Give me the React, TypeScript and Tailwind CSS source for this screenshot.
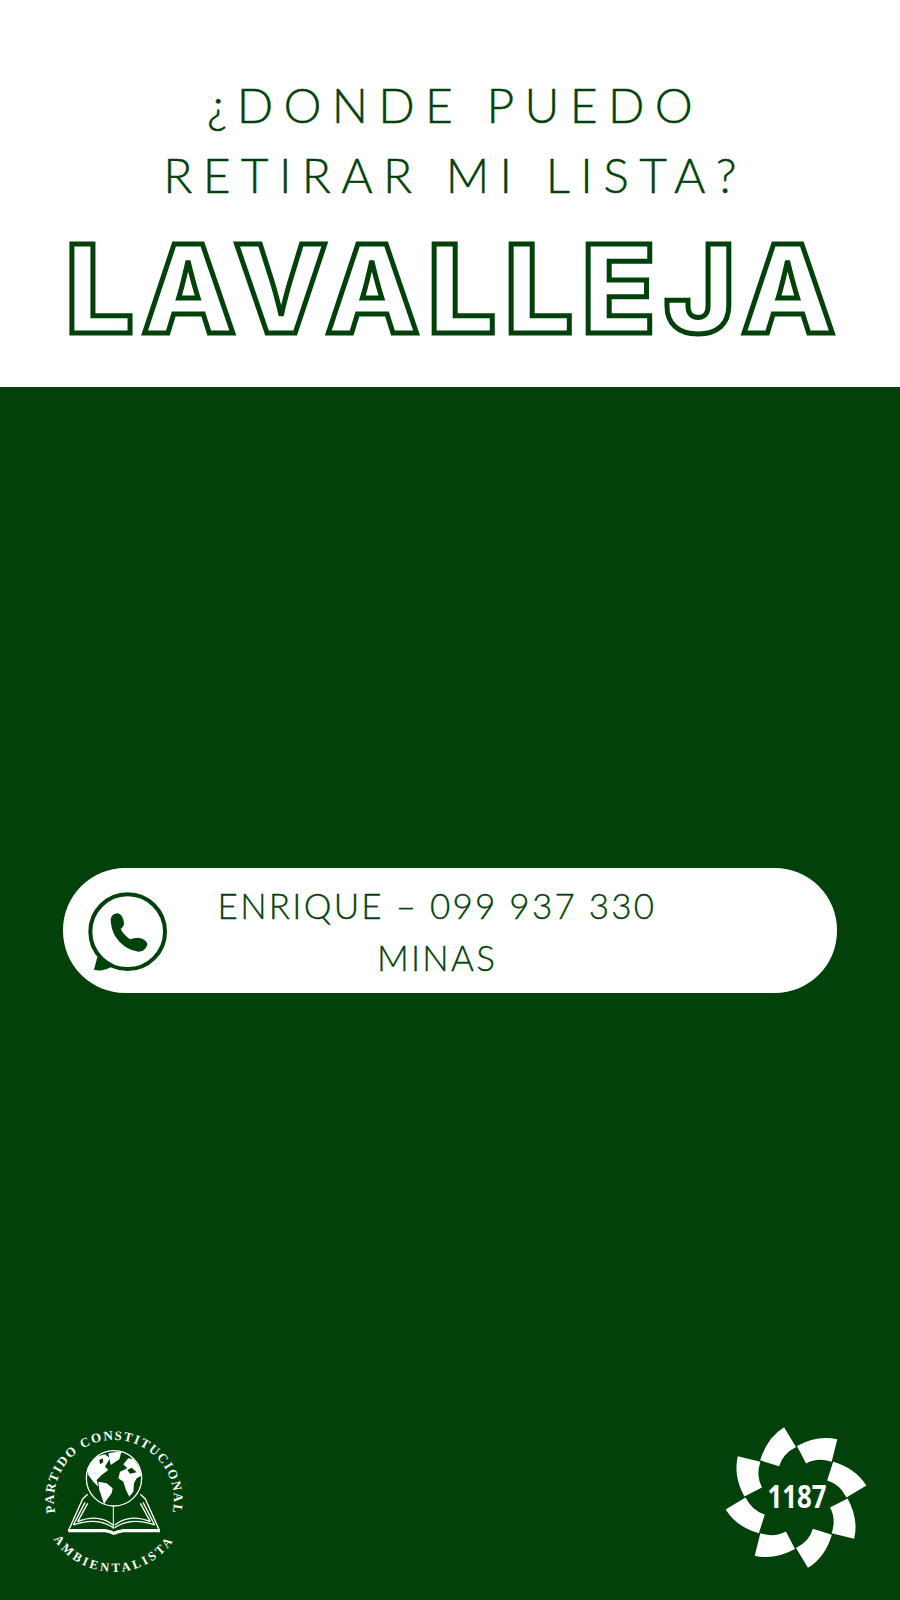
const GREEN = '#02420a';

const WhatsappIcon = () => (
  <svg width="110" height="100" viewBox="0 0 330 300" className="shrink-0">
    <circle cx="173" cy="152" r="112" fill="none" stroke={GREEN} strokeWidth="12" />
    <path d="M82 228L72 266Q95 273 124 258Z" fill={GREEN} />
    <path d="M122 115Q125 97 143 97Q158 100 162 125Q162 137 152 143Q160 160 180 175Q192 170 205 170Q232 175 232 192Q225 212 205 212Q160 205 135 165Q122 140 122 115Z" fill={GREEN} />
  </svg>
);

const PartidoLogo = () => (
  <svg width="160" height="151" viewBox="0 0 160 151">
    <defs>
      <path id="arcTop" d="M15.3 85.5A60 60 0 1 1 132 88" />
      <path id="arcBottom" d="M12.3 110A72 72 0 0 0 135.7 110" />
    </defs>
    <text fill="white" fontFamily="'Liberation Serif', serif" fontWeight="700" fontSize="13" letterSpacing="1.5">
      <textPath href="#arcTop">PARTIDO CONSTITUCIONAL</textPath>
    </text>
    <text fill="white" fontFamily="'Liberation Serif', serif" fontWeight="700" fontSize="12.5" letterSpacing="3" textAnchor="middle">
      <textPath href="#arcBottom" startOffset="50%">AMBIENTALISTA</textPath>
    </text>
    <g transform="translate(0 -2) scale(0.3333)">
      {/* book */}
      <path d="M85 318L128 222L143 208M100 300L135 232M113 290L143 235M359 318L316 222L301 208M344 300L309 232M331 290L301 235" fill="none" stroke="white" strokeWidth="4" />
      <path d="M100 300Q170 275 220 308M113 290Q175 265 220 300M344 300Q274 275 224 308M331 290Q269 265 224 300" fill="none" stroke="white" strokeWidth="4" />
      <path d="M220 235V312" stroke="white" strokeWidth="3" />
      <path d="M85 312H195Q215 316 222 320Q229 316 250 312H360V322H250Q232 325 222 330Q212 325 195 322H85Z" fill="white" />
      {/* globe */}
      <circle cx="222" cy="160" r="83" fill={GREEN} stroke="white" strokeWidth="4" />
      <path d="M142 130L170 95L195 88L210 100L195 125L205 135L185 150L170 165L175 185L160 170L145 150Z" fill="white" />
      <path d="M205 85L245 78L238 103L212 120Z" fill="white" />
      <path d="M175 170L200 175L218 190L215 205L200 225L192 238L185 215L178 195Z" fill="white" />
      <path d="M250 118L265 100L280 102L298 130L304 152L290 160L282 175L280 200L268 215L258 195L250 170L235 160L240 140L262 130Z" fill="white" />
      <path d="M262 135L275 128L290 142L270 146Z" fill={GREEN} />
      <path d="M178 105L188 100L190 112L180 118Z" fill={GREEN} />
    </g>
  </svg>
);

const Logo1187 = () => (
  <svg width="140" height="141" viewBox="47 52 422 424">
    {[0, 45, 90, 135, 180, 225, 270, 315].map((deg) => (
      <path key={deg} d="M150 152Q170 84 222 52L258 112Q218 132 207 170Z" fill="white" transform={`rotate(${deg} 258 264)`} />
    ))}
    <text x="172" y="295" fill="white" fontFamily="'Open Sans', sans-serif" fontWeight="700" fontSize="98" textLength="178" lengthAdjust="spacingAndGlyphs">1187</text>
  </svg>
);

export default function App() {
  return (
    <div className="w-[900px] h-[1600px] flex flex-col bg-[#02420a] overflow-hidden">
      <header className="h-[387px] bg-white flex flex-col items-center pt-[70px] text-[#02420a] font-['Lato',sans-serif]">
        <h2 className="text-[48px] leading-[70px] font-light tracking-[10.3px] text-center pl-[10px] [-webkit-text-stroke:0.4px_#02420a]">
          ¿DONDE PUEDO
          <br />
          RETIRAR MI LISTA?
        </h2>
        <h1 className="mt-[23px] text-[122px] leading-[112px] font-extrabold tracking-[8px] pl-[8px] text-white [-webkit-text-stroke:5px_#02420a] font-['Inter',sans-serif]">
          LAVALLEJA
        </h1>
      </header>

      <main className="flex-1 flex flex-col justify-between pl-[40px] pr-[34px] pb-[22px] pt-[481px]">
        <div className="ml-[23px] w-[774px] h-[125px] rounded-[62px] bg-white flex items-center pl-[7px] text-[#02420a]">
          <WhatsappIcon />
          <div className="w-[500px] ml-[7px] text-center font-['Lato',sans-serif] font-light text-[35px] leading-[52px] tracking-[2.25px] [-webkit-text-stroke:0.3px_#02420a]">
            <p>ENRIQUE – 099 937 330</p>
            <p>MINAS</p>
          </div>
        </div>

        <div className="flex items-start justify-between">
          <PartidoLogo />
          <Logo1187 />
        </div>
      </main>
    </div>
  );
}
